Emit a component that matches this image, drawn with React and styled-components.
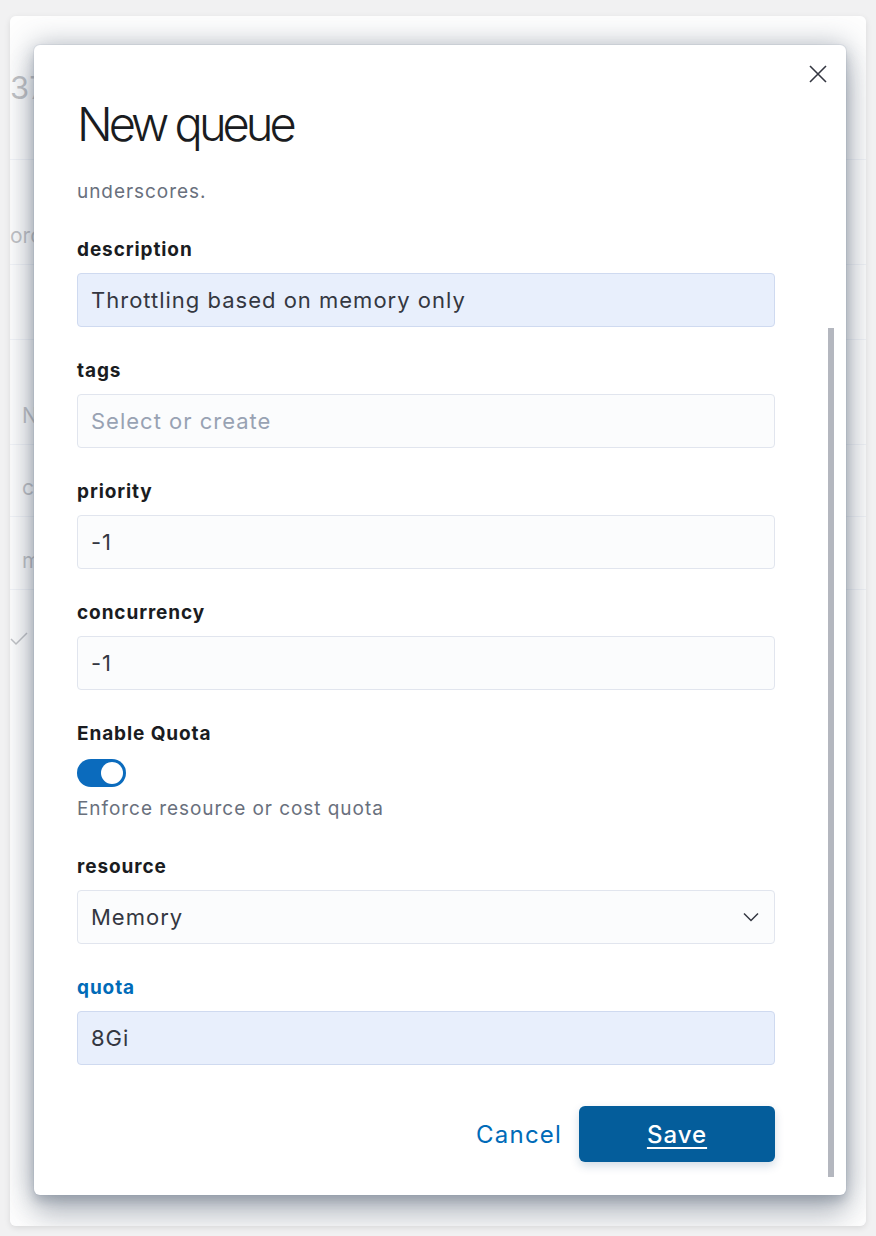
import React, { useLayoutEffect, useRef } from "react";
import styled, { createGlobalStyle } from "styled-components";

const GlobalStyle = createGlobalStyle`
  html, body { margin: 0; padding: 0; }
  body {
    background: #f1f1f2;
    font-family: Inter, "Noto Sans", sans-serif;
    -webkit-font-smoothing: antialiased;
  }
  * { box-sizing: border-box; }
`;

const Window = styled.div`
  height: 1236px;
  padding: 16px 10px 10px;
`;

const Panel = styled.div`
  position: relative;
  height: 1210px;
  background: #fafbfc;
  border-radius: 6px;
  overflow: hidden;
  box-shadow: 0 2px 6px rgba(0, 0, 0, 0.1);
`;

const StatBar = styled.div`
  height: 144px;
  display: flex;
  align-items: center;
  border-bottom: 1px solid #d3dae6;
`;

const BigStat = styled.span`
  font-size: 31px;
  color: #343741;
`;

const Band = styled.div`
  height: ${(p) => p.$h}px;
  display: flex;
  align-items: flex-end;
  padding: 0 0 ${(p) => p.$pb || 16}px ${(p) => (p.$flush ? 0 : 12)}px;
  border-bottom: 1px solid #d3dae6;
  font-size: 21px;
  color: #343741;
`;

const CheckCell = styled.div`
  padding: 40px 0 0 0;
`;

const Overlay = styled.div`
  position: absolute;
  inset: 0;
  background: rgba(255, 255, 255, 0.7);
  display: flex;
  align-items: center;
  justify-content: center;
  padding: 0 0 2px 4px;
`;

const Modal = styled.div`
  position: relative;
  width: 812px;
  height: 1150px;
  background: #ffffff;
  border-radius: 6px;
  display: flex;
  flex-direction: column;
  padding-bottom: 18px;
  box-shadow: 0 0 0 1px rgba(152, 162, 179, 0.16),
    0 0 28px 2px rgba(65, 78, 101, 0.34),
    0 22px 30px 0 rgba(65, 78, 101, 0.3), 0 6px 10px rgba(65, 78, 101, 0.2);
`;

const CloseButton = styled.button`
  position: absolute;
  top: 13px;
  right: 12px;
  width: 32px;
  height: 32px;
  border: none;
  background: none;
  padding: 0;
  display: flex;
  align-items: center;
  justify-content: center;
  cursor: pointer;
`;

const ScrollThumb = styled.div`
  position: absolute;
  top: 283px;
  right: 12px;
  width: 6px;
  height: 849px;
  background: #b4b7bf;
`;

const Header = styled.div`
  flex: none;
  padding: 50px 43px 32px;
`;

const Title = styled.h2`
  margin: 0;
  font-size: 47px;
  line-height: 58px;
  font-weight: 300;
  letter-spacing: -4px;
  color: #1a1c21;
`;

const ScrollArea = styled.div`
  flex: 1;
  min-height: 0;
  overflow-y: auto;
  scrollbar-width: none;
  &::-webkit-scrollbar {
    display: none;
  }
`;

const ScrollContent = styled.div`
  padding: 45px 71px 15px 43px;
`;

const Row = styled.div`
  padding-bottom: ${(p) => (p.$help ? 3 : 0)}px;
  & + & {
    margin-top: 32px;
  }
`;

const Label = styled.label`
  display: block;
  font-size: 19px;
  line-height: 24px;
  font-weight: 700;
  letter-spacing: 0.9px;
  color: ${(p) => (p.$active ? "#006bb8" : "#1a1c21")};
  margin-bottom: ${(p) => (p.$tight ? 13 : 11)}px;
`;

const Input = styled.input`
  display: block;
  width: 100%;
  height: 54px;
  padding: 0 13px;
  font-family: Inter, "Noto Sans", sans-serif;
  font-size: 22px;
  letter-spacing: 1px;
  color: #343741;
  background: ${(p) => (p.$filled ? "#e8effc" : "#fbfcfd")};
  border: 1px solid ${(p) => (p.$filled ? "#cfdaf0" : "#e1e5ee")};
  border-radius: 4px;
  outline: none;
  &::placeholder {
    color: #98a2b3;
  }
`;

const SelectBox = styled.div`
  height: 54px;
  padding: 0 15px 0 13px;
  display: flex;
  align-items: center;
  justify-content: space-between;
  font-size: 22px;
  letter-spacing: 1px;
  color: #343741;
  background: #fbfcfd;
  border: 1px solid #e1e5ee;
  border-radius: 4px;
`;

const Help = styled.div`
  margin-top: 11px;
  font-size: 19px;
  line-height: 22px;
  letter-spacing: 0.95px;
  color: #69707d;
`;

const Switch = styled.button`
  display: flex;
  align-items: center;
  justify-content: flex-end;
  width: 49px;
  height: 28px;
  padding: 0 3px;
  border: none;
  border-radius: 14px;
  background: #0b6bbd;
`;

const Knob = styled.span`
  width: 22px;
  height: 22px;
  border-radius: 50%;
  background: #ffffff;
`;

const Footer = styled.div`
  margin-top: 41px;
  display: flex;
  justify-content: flex-end;
  align-items: center;
  gap: 17px;
  padding-right: 0;
`;

const CancelButton = styled.button`
  border: none;
  background: none;
  padding: 0;
  font-family: Inter, "Noto Sans", sans-serif;
  font-size: 24px;
  letter-spacing: 1.2px;
  color: #006bb8;
  cursor: pointer;
`;

const SaveButton = styled.button`
  width: 196px;
  height: 56px;
  border: none;
  border-radius: 6px;
  background: #045d9b;
  color: #ffffff;
  font-family: Inter, "Noto Sans", sans-serif;
  font-size: 24px;
  font-weight: 500;
  letter-spacing: 1px;
  text-decoration: underline;
  text-underline-offset: 4px;
  box-shadow: 0 4px 10px rgba(0, 60, 110, 0.18);
  cursor: pointer;
`;

const CloseIcon = () => (
  <svg width="18" height="18" viewBox="0 0 18 18" fill="none">
    <path d="M1 1L17 17M17 1L1 17" stroke="#343741" strokeWidth="1.6" />
  </svg>
);

const Chevron = () => (
  <svg width="16" height="10" viewBox="0 0 16 10" fill="none">
    <path d="M1 1.5L8 8.5L15 1.5" stroke="#343741" strokeWidth="1.5" />
  </svg>
);

const Check = () => (
  <svg width="18" height="14" viewBox="0 0 18 14" fill="none">
    <path d="M1 7L6 12L17 1" stroke="#343741" strokeWidth="1.5" />
  </svg>
);

export default function App() {
  const scrollRef = useRef(null);
  useLayoutEffect(() => {
    const el = scrollRef.current;
    if (el) el.scrollTop = el.scrollHeight;
  }, []);

  return (
    <>
      <GlobalStyle />
      <Window>
        <Panel>
          <StatBar>
            <BigStat>372</BigStat>
          </StatBar>
          <Band $h={105} $flush>
            ordered
          </Band>
          <Band $h={75} />
          <Band $h={105}>Name</Band>
          <Band $h={72}>cpu-queue</Band>
          <Band $h={73}>memory-queue</Band>
          <CheckCell>
            <Check />
          </CheckCell>

          <Overlay>
            <Modal>
              <CloseButton aria-label="Close">
                <CloseIcon />
              </CloseButton>
              <Header>
                <Title>New queue</Title>
              </Header>
              <ScrollArea ref={scrollRef}>
                <ScrollContent>
                  <Row $help>
                    <Label>name</Label>
                    <Input defaultValue="memory-throttle" />
                    <Help>
                      Must contain only lowercase letters, numbers, hyphens and
                      <br />
                      underscores.
                    </Help>
                  </Row>
                  <Row>
                    <Label>description</Label>
                    <Input $filled defaultValue="Throttling based on memory only" />
                  </Row>
                  <Row>
                    <Label>tags</Label>
                    <Input placeholder="Select or create" />
                  </Row>
                  <Row>
                    <Label>priority</Label>
                    <Input defaultValue="-1" />
                  </Row>
                  <Row>
                    <Label>concurrency</Label>
                    <Input defaultValue="-1" />
                  </Row>
                  <Row $help>
                    <Label $tight>Enable Quota</Label>
                    <Switch aria-label="Enable Quota">
                      <Knob />
                    </Switch>
                    <Help>Enforce resource or cost quota</Help>
                  </Row>
                  <Row>
                    <Label>resource</Label>
                    <SelectBox>
                      <span>Memory</span>
                      <Chevron />
                    </SelectBox>
                  </Row>
                  <Row>
                    <Label $active>quota</Label>
                    <Input $filled defaultValue="8Gi" />
                  </Row>
                  <Footer>
                    <CancelButton>Cancel</CancelButton>
                    <SaveButton>Save</SaveButton>
                  </Footer>
                </ScrollContent>
              </ScrollArea>
              <ScrollThumb />
            </Modal>
          </Overlay>
        </Panel>
      </Window>
    </>
  );
}
